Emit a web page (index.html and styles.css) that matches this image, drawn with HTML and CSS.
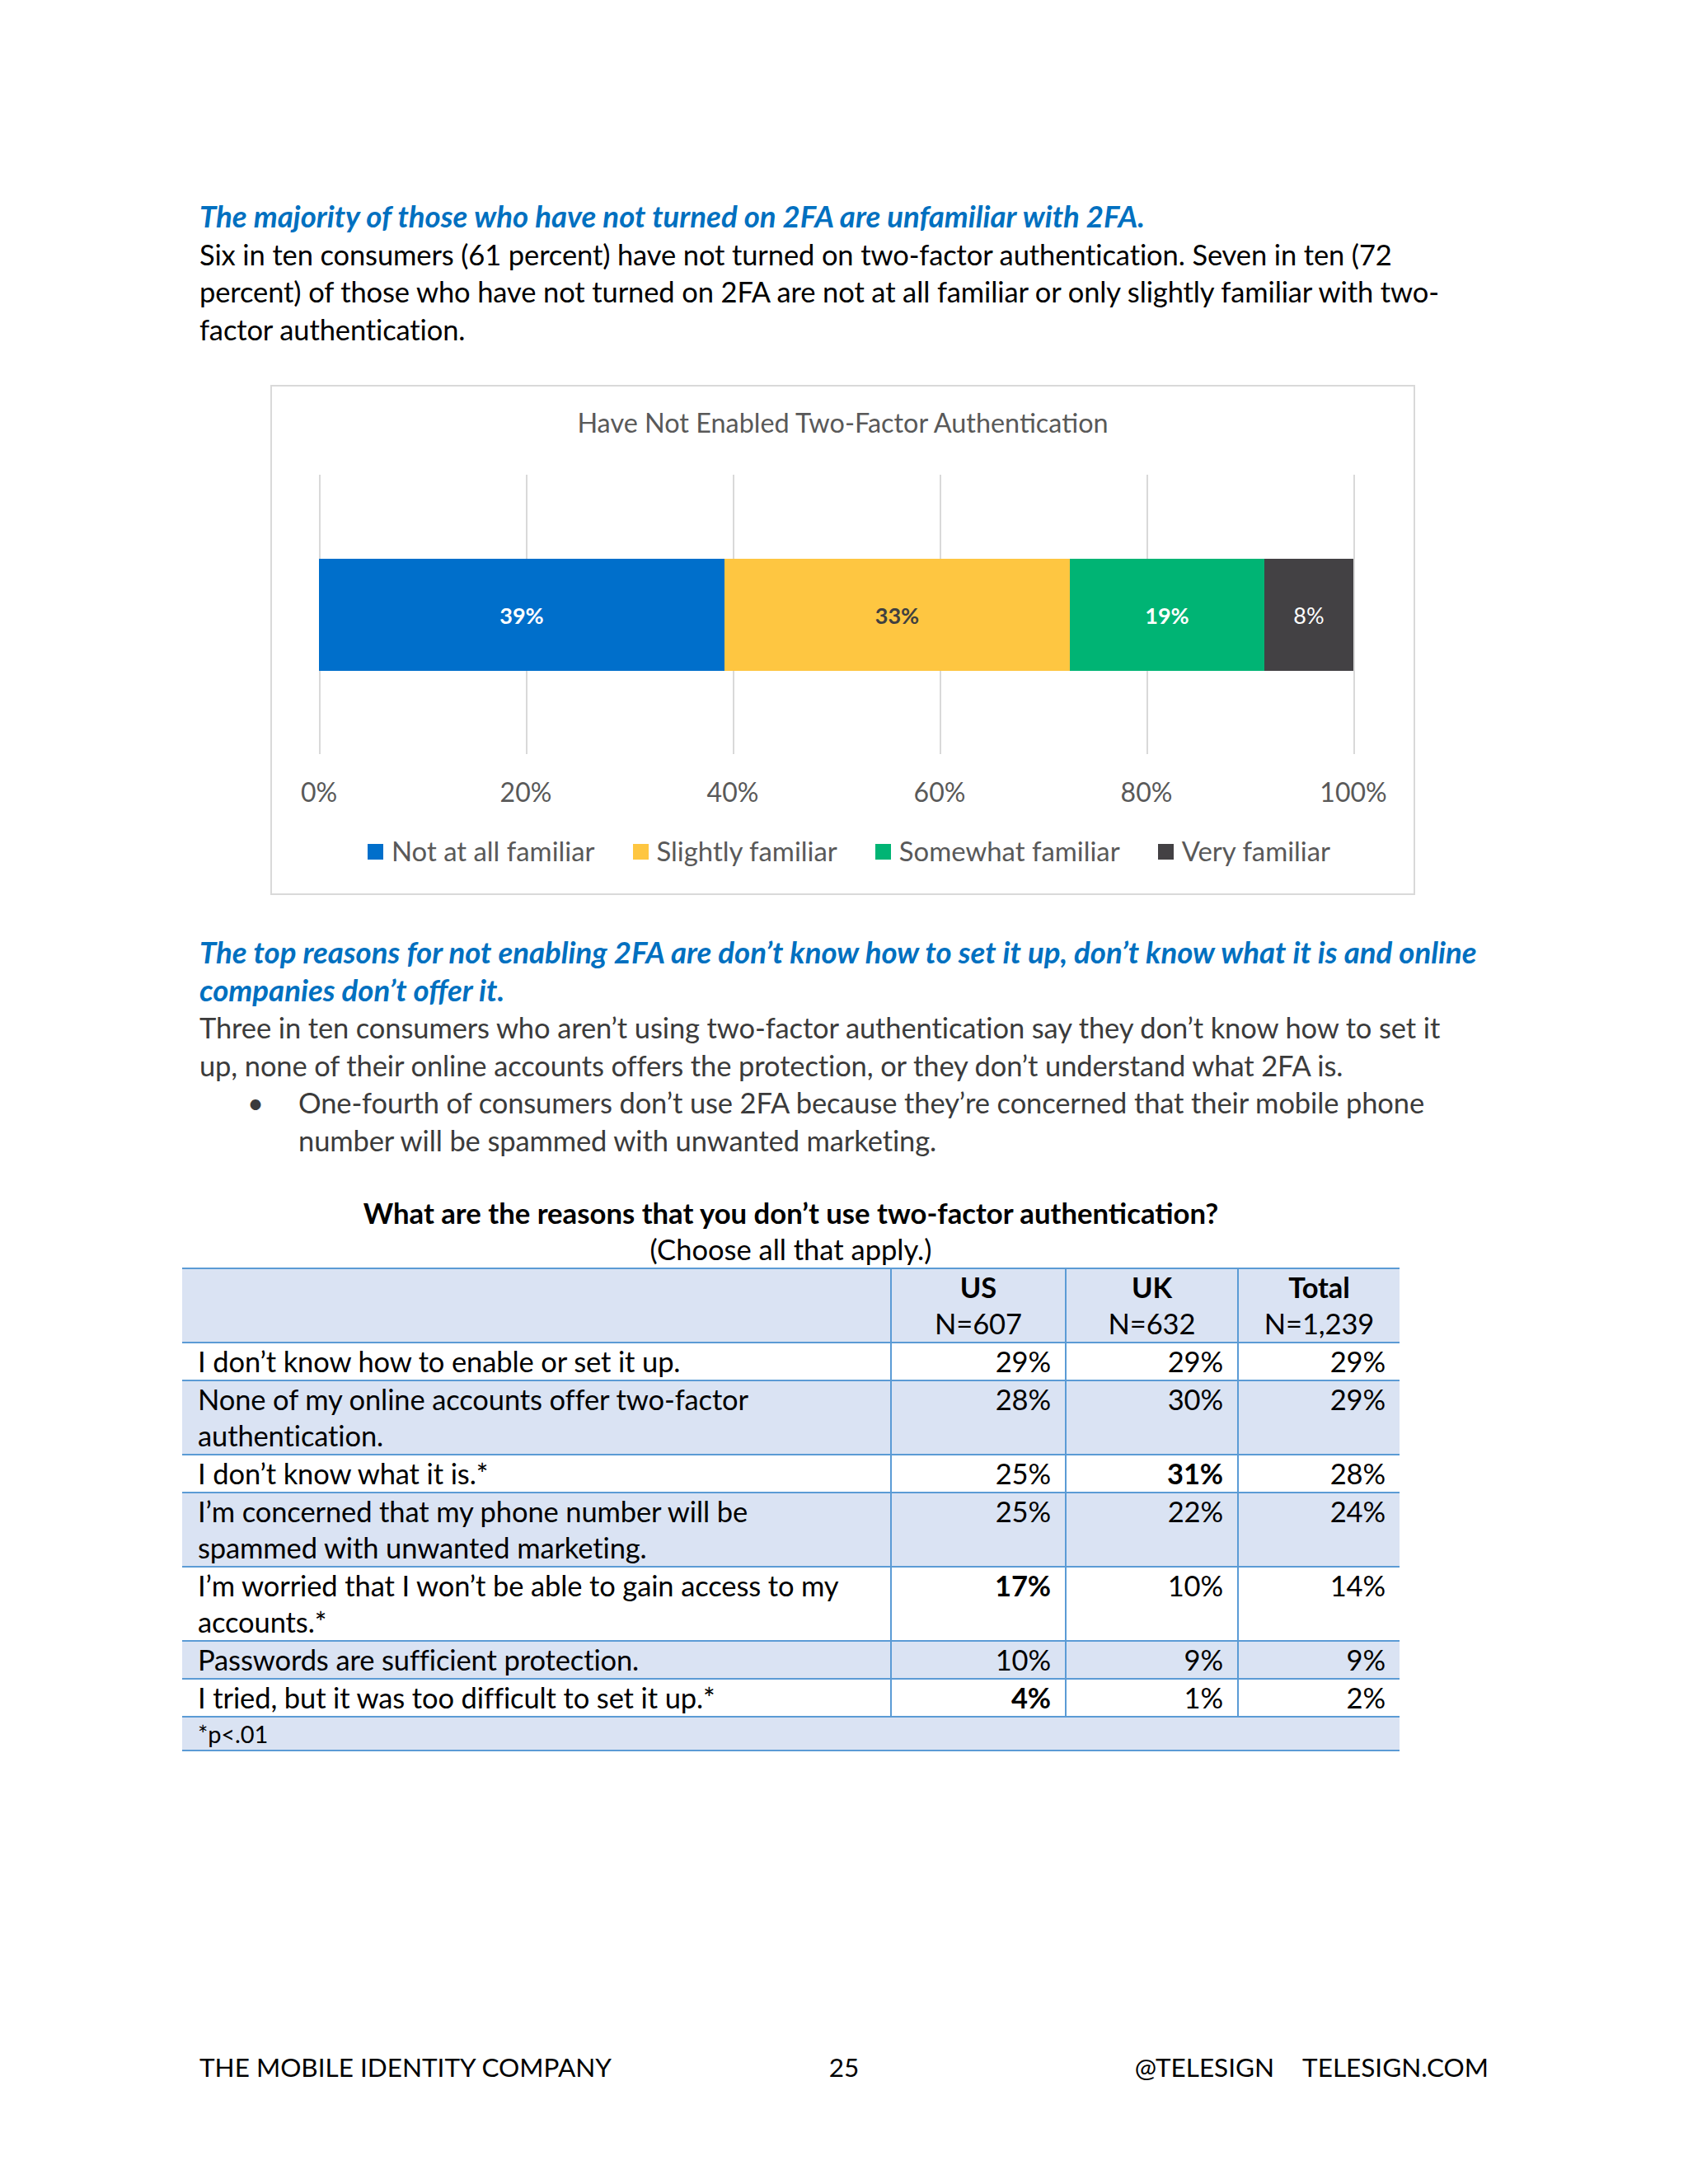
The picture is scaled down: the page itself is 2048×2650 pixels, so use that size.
FILE: index.html
```html
<!DOCTYPE html>
<html lang="en">
<head>
<meta charset="utf-8">
<title>Have Not Enabled Two-Factor Authentication</title>
<link rel="stylesheet" href="styles.css">
</head>
<body>
<div class="page">
  <main class="content">
    <h2 class="lead">The majority of those who have not turned on 2FA are unfamiliar with 2FA.</h2>
    <p class="text dark">Six in ten consumers (61 percent) have not turned on two-factor authentication. Seven in ten (72<br>percent) of those who have not turned on 2FA are not at all familiar or only slightly familiar with two-<br>factor authentication.</p>

    <figure class="chart">
      <div class="chart-title">Have Not Enabled Two-Factor Authentication</div>
      <div class="plot">
        <div class="bar">
          <div class="seg seg-blue" style="width:492px">39%</div>
          <div class="seg seg-yellow" style="width:419px">33%</div>
          <div class="seg seg-green" style="width:236px">19%</div>
          <div class="seg seg-dark" style="width:108px">8%</div>
        </div>
      </div>
      <div class="axis">
        <span>0%</span><span>20%</span><span>40%</span><span>60%</span><span>80%</span><span>100%</span>
      </div>
      <div class="legend">
        <span class="key"><i class="sw sw-blue"></i>Not at all familiar</span>
        <span class="key"><i class="sw sw-yellow"></i>Slightly familiar</span>
        <span class="key"><i class="sw sw-green"></i>Somewhat familiar</span>
        <span class="key"><i class="sw sw-dark"></i>Very familiar</span>
      </div>
    </figure>

    <h2 class="lead lead-2">The top reasons for not enabling 2FA are don’t know how to set it up, don’t know what it is and online<br>companies don’t offer it.</h2>
    <p class="text grey">Three in ten consumers who aren’t using two-factor authentication say they don’t know how to set it<br>up, none of their online accounts offers the protection, or they don’t understand what 2FA is.</p>
    <div class="bullet grey">
      <span class="dot">•</span>
      <p>One-fourth of consumers don’t use 2FA because they’re concerned that their mobile phone<br>number will be spammed with unwanted marketing.</p>
    </div>

    <div class="table-wrap">
      <div class="table-title">What are the reasons that you don’t use two-factor authentication?</div>
      <div class="table-sub">(Choose all that apply.)</div>
      <table class="tbl">
        <colgroup><col class="c1"><col class="c2"><col class="c3"><col class="c4"></colgroup>
        <tr class="shade head">
          <td></td>
          <td class="ctr"><b>US</b><br>N=607</td>
          <td class="ctr"><b>UK</b><br>N=632</td>
          <td class="ctr"><b>Total</b><br>N=1,239</td>
        </tr>
        <tr>
          <td>I don’t know how to enable or set it up.</td>
          <td class="num">29%</td><td class="num">29%</td><td class="num">29%</td>
        </tr>
        <tr class="shade">
          <td>None of my online accounts offer two-factor<br>authentication.</td>
          <td class="num">28%</td><td class="num">30%</td><td class="num">29%</td>
        </tr>
        <tr>
          <td>I don’t know what it is.*</td>
          <td class="num">25%</td><td class="num"><b>31%</b></td><td class="num">28%</td>
        </tr>
        <tr class="shade">
          <td>I’m concerned that my phone number will be<br>spammed with unwanted marketing.</td>
          <td class="num">25%</td><td class="num">22%</td><td class="num">24%</td>
        </tr>
        <tr>
          <td>I’m worried that I won’t be able to gain access to my<br>accounts.*</td>
          <td class="num"><b>17%</b></td><td class="num">10%</td><td class="num">14%</td>
        </tr>
        <tr class="shade">
          <td>Passwords are sufficient protection.</td>
          <td class="num">10%</td><td class="num">9%</td><td class="num">9%</td>
        </tr>
        <tr>
          <td>I tried, but it was too difficult to set it up.*</td>
          <td class="num"><b>4%</b></td><td class="num">1%</td><td class="num">2%</td>
        </tr>
        <tr class="shade foot">
          <td colspan="4">*p&lt;.01</td>
        </tr>
      </table>
    </div>
  </main>

  <footer class="footer">
    <span class="f-left">THE MOBILE IDENTITY COMPANY</span>
    <span class="f-mid">25</span>
    <span class="f-right"><span>@TELESIGN</span><span>TELESIGN.COM</span></span>
  </footer>
</div>
</body>
</html>
```

FILE: styles.css
```css
* { box-sizing: border-box; }

html, body {
  margin: 0;
  padding: 0;
  background: #ffffff;
}

body {
  font-family: "Lato", "Open Sans", "Liberation Sans", sans-serif;
  color: #000000;
}

.page {
  width: 2048px;
  height: 2650px;
  display: flex;
  flex-direction: column;
  padding: 240px 0 119px;
}

.content {
  padding: 0 242px;
  flex: 1;
}

.lead {
  margin: 0;
  font-size: 36.6px;
  line-height: 45.5px;
  font-weight: 700;
  font-style: italic;
  color: #0070c0;
  white-space: nowrap;
}

.lead-2 {
  margin-top: 47px;
}

.text {
  margin: 0;
  font-size: 34.5px;
  letter-spacing: -0.12px;
  line-height: 45.5px;
  white-space: nowrap;
}

.dark { color: #000000; }
.grey { color: #3b3b3b; }

/* ---------- chart ---------- */
.chart {
  margin: 45px 0 0 86px;
  width: 1389px;
  height: 619px;
  border: 2px solid #d9d9d9;
  padding: 0 0 0 57px;
  color: #595959;
}

.chart-title {
  margin: 24px 0 0 -57px;
  text-align: center;
  font-size: 32.4px;
  line-height: 40px;
}

.plot {
  margin-top: 43px;
  width: 1257px;
  height: 339px;
  padding-top: 102px;
  background-image: linear-gradient(to right, #d9d9d9 2px, transparent 2px);
  background-size: 251px 100%;
  background-repeat: repeat-x;
}

.bar {
  display: flex;
  height: 136px;
  width: 1255px;
}

.seg {
  display: flex;
  align-items: center;
  justify-content: center;
  font-size: 27px;
  font-weight: 700;
  color: #ffffff;
}

.seg-blue { background: #006fcb; }
.seg-yellow { background: #fec641; color: #404040; }
.seg-green { background: #00b474; }
.seg-dark { background: #434144; font-weight: 400; }

.axis {
  margin: 26px 0 0 -125.5px;
  width: 1506px;
  display: grid;
  grid-template-columns: repeat(6, 251px);
  font-size: 32px;
  line-height: 40px;
  text-align: center;
}

.legend {
  margin: 32px 0 0 59px;
  display: flex;
  gap: 46px;
  font-size: 32.9px;
  line-height: 40px;
}

.key {
  display: flex;
  align-items: center;
  gap: 10px;
}

.sw {
  display: block;
  width: 19px;
  height: 19px;
}

.sw-blue { background: #006fcb; }
.sw-yellow { background: #fec641; }
.sw-green { background: #00b474; }
.sw-dark { background: #434144; }

/* ---------- bullet ---------- */
.bullet {
  display: grid;
  grid-template-columns: 120px 1fr;
  font-size: 34.5px;
  letter-spacing: -0.12px;
  line-height: 45.5px;
  white-space: nowrap;
}

.bullet .dot {
  padding-left: 58px;
}

.bullet p { margin: 0; }

/* ---------- table ---------- */
.table-wrap {
  margin: 44px 0 0 -21px;
  width: 1477px;
}

.table-title {
  text-align: center;
  font-size: 34.7px;
  line-height: 44px;
  font-weight: 700;
}

.table-sub {
  text-align: center;
  font-size: 34.5px;
  line-height: 44px;
}

.tbl {
  width: 1477px;
  border-collapse: collapse;
  table-layout: fixed;
  font-size: 34.5px;
  letter-spacing: -0.12px;
}

.c1 { width: 860px; }
.c2 { width: 212px; }
.c3 { width: 209px; }
.c4 { width: 196px; }

.tbl td {
  padding: 0 19px;
  line-height: 44px;
  vertical-align: top;
  white-space: nowrap;
  border-top: 2px solid #5b9bd5;
  border-bottom: 2px solid #5b9bd5;
}

.tbl td + td {
  border-left: 2px solid #5b9bd5;
}

.tbl .shade td { background: #dae3f3; }

.tbl .ctr { text-align: center; }
.tbl .num { text-align: right; padding-right: 17px; }

.tbl .foot td {
  font-size: 29px;
  line-height: 39px;
}

/* ---------- footer ---------- */
.footer {
  display: grid;
  grid-template-columns: 1fr auto 1fr;
  align-items: center;
  padding: 0 242px;
  font-size: 31.5px;
  line-height: 46px;
}

.f-mid { text-align: center; }

.f-right {
  display: flex;
  justify-content: flex-end;
  gap: 34px;
}
```
